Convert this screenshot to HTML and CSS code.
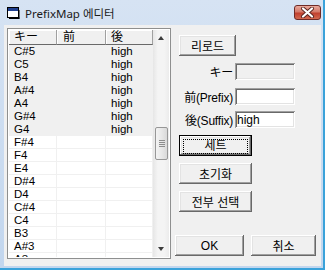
FILE: index.html
```html
<!DOCTYPE html>
<html lang="ko">
<head>
    <meta charset="UTF-8">
    <title>PrefixMap 에디터</title>
    <link rel="stylesheet" href="styles.css">
</head>
<body>

    <div class="window">
        <div class="titlebar">
            <svg class="app-icon" width="13" height="12" viewBox="0 0 13 12">
                <rect x="0.5" y="0.5" width="11" height="10" fill="#fff" stroke="#000"/>
                <rect x="1" y="1" width="10" height="3" fill="#1f3f8f"/>
                <rect x="11" y="3" width="1.5" height="8.5" fill="#000"/>
                <rect x="2" y="10.5" width="10.5" height="1.5" fill="#000"/>
            </svg>
            <span class="title">PrefixMap 에디터</span>
            <div class="close">
                <svg width="17" height="11" viewBox="0 0 17 11">
                    <path d="M4 1.5 L13 9.5 M13 1.5 L4 9.5" stroke="#5a2420" stroke-width="4" stroke-linecap="round"/>
                    <path d="M4 1.5 L13 9.5 M13 1.5 L4 9.5" stroke="#fff" stroke-width="2.2" stroke-linecap="round"/>
                </svg>
            </div>
        </div>

        <div class="client">
            <div class="list">
                <div class="grid">
                    <div class="head">
                        <span class="c1">キー</span><span class="c2">前</span><span class="c3">後</span>
                    </div>
                    <div class="row set"><span class="c1">C#5</span><span class="c2"></span><span class="c3">high</span></div>
                    <div class="row set"><span class="c1">C5</span><span class="c2"></span><span class="c3">high</span></div>
                    <div class="row set"><span class="c1">B4</span><span class="c2"></span><span class="c3">high</span></div>
                    <div class="row set"><span class="c1">A#4</span><span class="c2"></span><span class="c3">high</span></div>
                    <div class="row set"><span class="c1">A4</span><span class="c2"></span><span class="c3">high</span></div>
                    <div class="row set"><span class="c1">G#4</span><span class="c2"></span><span class="c3">high</span></div>
                    <div class="row set"><span class="c1">G4</span><span class="c2"></span><span class="c3">high</span></div>
                    <div class="row"><span class="c1">F#4</span><span class="c2"></span><span class="c3"></span></div>
                    <div class="row"><span class="c1">F4</span><span class="c2"></span><span class="c3"></span></div>
                    <div class="row"><span class="c1">E4</span><span class="c2"></span><span class="c3"></span></div>
                    <div class="row"><span class="c1">D#4</span><span class="c2"></span><span class="c3"></span></div>
                    <div class="row"><span class="c1">D4</span><span class="c2"></span><span class="c3"></span></div>
                    <div class="row"><span class="c1">C#4</span><span class="c2"></span><span class="c3"></span></div>
                    <div class="row"><span class="c1">C4</span><span class="c2"></span><span class="c3"></span></div>
                    <div class="row"><span class="c1">B3</span><span class="c2"></span><span class="c3"></span></div>
                    <div class="row"><span class="c1">A#3</span><span class="c2"></span><span class="c3"></span></div>
                    <div class="row"><span class="c1">A3</span><span class="c2"></span><span class="c3"></span></div>
                </div>
                <div class="vscroll">
                    <div class="arrow up"></div>
                    <div class="track">
                        <div class="thumb"><span></span><span></span><span></span><span></span></div>
                    </div>
                    <div class="arrow down"></div>
                </div>
            </div>

            <div class="side">
                <button class="btn reload">리로드</button>

                <div class="field key">
                    <label>キー</label>
                    <input class="edit disabled" type="text" value="" disabled>
                </div>
                <div class="field prefix">
                    <label>前(Prefix)</label>
                    <input class="edit" type="text" value="">
                </div>
                <div class="field suffix">
                    <label>後(Suffix)</label>
                    <input class="edit" type="text" value="high">
                </div>

                <button class="btn wide default"><span class="focus">세트</span></button>
                <button class="btn wide">초기화</button>
                <button class="btn wide">전부 선택</button>

                <div class="footer">
                    <button class="btn ok">OK</button>
                    <button class="btn cancel">취소</button>
                </div>
            </div>
        </div>
    </div>

</body>
</html>
```

FILE: styles.css
```css
body {
    margin: 0;
    width: 325px;
    height: 270px;
    overflow: hidden;
    background-color: #fff;
    font-family: "Liberation Sans", "Noto Sans CJK KR", sans-serif;
    font-size: 12px;
    color: #000;
}
.window {
    box-sizing: border-box;
    width: 325px;
    height: 270px;
    display: flex;
    flex-direction: column;
    background: linear-gradient(#d6e3f3, #c2d6ee);
    padding: 0 2px 2px 4px;
    border-right: 2px solid #3aa2da;
    border-bottom: 2px solid #3aa2da;
}
.titlebar {
    height: 25px;
    flex: none;
    display: flex;
    align-items: center;
    padding-left: 3px;
    position: relative;
}
.app-icon {
    display: block;
    margin-top: 1px;
}
.title {
    margin-left: 5px;
    font-family: "Noto Sans", "Noto Sans CJK KR", sans-serif;
    font-size: 11.5px;
    color: #1a1a1a;
}
.close {
    position: absolute;
    top: 5px;
    right: 0;
    box-sizing: border-box;
    width: 27px;
    height: 15px;
    border: 1px solid #6e2a26;
    border-radius: 3px;
    background: linear-gradient(#e9a99c, #d47a6a 45%, #c1402f 55%, #d2684f);
    display: flex;
    align-items: center;
    justify-content: center;
}
.close svg {
    display: block;
}
.client {
    flex: 1;
    display: flex;
    background-color: #f0f0f0;
    padding: 3px 0 0 3px;
}

/* list view */
.list {
    box-sizing: border-box;
    width: 164px;
    height: 231px;
    border: 1px solid #8e8f8f;
    padding: 1px;
    background-color: #fff;
    display: flex;
    overflow: hidden;
}
.grid {
    width: 144px;
    overflow: hidden;
}
.head,
.row {
    display: flex;
}
.head span,
.row span {
    box-sizing: border-box;
    display: block;
    white-space: nowrap;
}
.c1 { width: 48px; }
.c2 { width: 49px; }
.c3 { width: 47px; }
.head {
    height: 15px;
}
.head span {
    height: 15px;
    line-height: 14px;
    padding-left: 5px;
    background-color: #f0f0f0;
    border-right: 1px solid #a0a0a0;
    border-bottom: 1px solid #696969;
    box-shadow: inset 1px 1px #fff;
}
.head .c2 {
    padding-left: 6px;
}
.row span {
    height: 13px;
    line-height: 13px;
    padding-left: 5px;
    font-size: 11.5px;
    border-right: 1px solid #f0f0f0;
    border-bottom: 1px solid #f0f0f0;
}
.row.set span {
    background-color: #f0f0f0;
}
.vscroll {
    width: 16px;
    display: flex;
    flex-direction: column;
    background: linear-gradient(to right, #e6e6e6, #f4f4f4 30%, #f4f4f4 70%, #ececec);
}
.arrow {
    height: 16px;
    flex: none;
    display: flex;
    align-items: center;
    justify-content: center;
}
.arrow::before {
    content: "";
    border-left: 3px solid transparent;
    border-right: 3px solid transparent;
}
.arrow.up::before {
    border-bottom: 4px solid #3c3c3c;
}
.arrow.down::before {
    border-top: 4px solid #3c3c3c;
}
.track {
    flex: 1;
}
.thumb {
    box-sizing: border-box;
    width: 13px;
    height: 33px;
    margin: 81px 0 0 2px;
    border: 1px solid #979797;
    border-radius: 2px;
    background: linear-gradient(to right, #f3f3f3, #e8e8e8 50%, #d9d9d9);
    display: flex;
    flex-direction: column;
    justify-content: center;
    align-items: center;
    gap: 1px;
}
.thumb span {
    width: 6px;
    height: 1px;
    background-color: #8c8c8c;
}

/* right column */
.side {
    flex: 1;
    display: flex;
    flex-direction: column;
    align-items: flex-start;
    padding: 7px 0 0 4px;
}
.btn {
    box-sizing: border-box;
    height: 21px;
    padding: 0;
    border: none;
    background-color: #f0f0f0;
    font-family: "Liberation Sans", "Noto Sans CJK KR", sans-serif;
    font-size: 12px;
    color: #000;
    box-shadow: inset -1px -1px #696969, inset 1px 1px #fff, inset -2px -2px #a0a0a0, inset 2px 2px #e3e3e3;
}
.btn.reload {
    width: 57px;
    margin-left: 4px;
}
.btn.wide {
    width: 73px;
    margin-left: 4px;
    margin-top: 7px;
}
.btn.default {
    border: 1px solid #000;
    box-shadow: inset -1px -1px #696969, inset 1px 1px #fff, inset -2px -2px #a0a0a0, inset 2px 2px #e3e3e3;
    padding: 3px;
}
.btn.default .focus {
    display: block;
    height: 13px;
    line-height: 12px;
    border: 1px dotted #000;
}
.field {
    display: flex;
    align-items: center;
    gap: 2px;
    height: 17px;
}
.field.key { margin-top: 7px; }
.field.prefix { margin-top: 8px; }
.field.suffix { margin-top: 6px; }
.field label {
    width: 58px;
    text-align: right;
    white-space: nowrap;
    letter-spacing: -0.2px;
}
.edit {
    box-sizing: border-box;
    width: 60px;
    height: 17px;
    margin: 0;
    padding: 0 2px;
    border: none;
    background-color: #fff;
    font-family: "Liberation Sans", "Noto Sans CJK KR", sans-serif;
    font-size: 12px;
    color: #000;
    box-shadow: inset 1px 1px #a0a0a0, inset -1px -1px #fff, inset 2px 2px #696969, inset -2px -2px #e3e3e3;
    outline: none;
}
.edit.disabled {
    background-color: #f0f0f0;
}
.footer {
    display: flex;
    gap: 7px;
    margin-top: 23px;
}
.btn.ok {
    width: 69px;
}
.btn.cancel {
    width: 65px;
}
```
